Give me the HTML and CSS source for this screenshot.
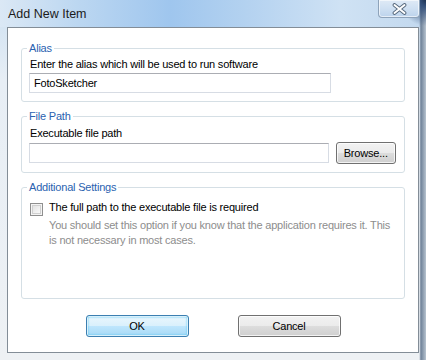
FILE: index.html
```html
<!DOCTYPE html>
<html lang="en">
<head>
  <meta charset="UTF-8">
  <title>Add New Item</title>
  <link rel="stylesheet" href="styles.css">
</head>
<body>
  <div class="window">
    <div class="titlebar">
      <span class="title">Add New Item</span>
      <button class="close" title="Close">
        <svg width="15" height="12" viewBox="0 0 15 12">
          <path d="M2.5 2 L12.5 10 M12.5 2 L2.5 10" stroke="#56687c" stroke-width="3.8" stroke-linecap="round"/>
          <path d="M2.5 2 L12.5 10 M12.5 2 L2.5 10" stroke="#ffffff" stroke-width="2" stroke-linecap="round"/>
        </svg>
      </button>
    </div>

    <div class="client">
      <fieldset class="group">
        <legend>Alias</legend>
        <div class="label">Enter the alias which will be used to run software</div>
        <input class="textbox" type="text" value="FotoSketcher">
      </fieldset>

      <fieldset class="group path">
        <legend>File Path</legend>
        <div class="label">Executable file path</div>
        <div class="row">
          <input class="textbox" type="text" value="">
          <button class="btn browse">Browse...</button>
        </div>
      </fieldset>

      <fieldset class="group settings">
        <legend>Additional Settings</legend>
        <label class="check">
          <span class="checkbox"></span>
          <span>The full path to the executable file is required</span>
        </label>
        <p class="hint">You should set this option if you know that the application requires it. This is not necessary in most cases.</p>
      </fieldset>

      <div class="actions">
        <button class="btn default">OK</button>
        <button class="btn">Cancel</button>
      </div>
    </div>
  </div>
</body>
</html>
```

FILE: styles.css
```css
html, body {
  margin: 0;
  padding: 0;
}

body {
  width: 426px;
  height: 360px;
  overflow: hidden;
  font-family: 'Liberation Sans', Arial, sans-serif;
  font-size: 11px;
  letter-spacing: -0.2px;
  color: #000;
}

.window {
  width: 426px;
  height: 360px;
  box-sizing: border-box;
  padding: 0 7px;
  background:
    radial-gradient(circle at 100% 0, #1d3150 0, #34507a 6px, rgba(80, 110, 150, 0) 26px),
    linear-gradient(90deg, rgba(0,0,0,0) 98.4%, #6f8299 98.8%, #b7c3cf 100%),
    linear-gradient(90deg, #dbe8f5 0%, #bcd7f1 18%, #9fc6ee 40%, #b4d2f0 58%, #cfe2f4 80%, #c2d8ee 100%) top / 100% 27px no-repeat,
    linear-gradient(to bottom, #d6e5f3 27px, #e7eef5 80px, #eef1f4 100%);
}

.titlebar {
  height: 27px;
  display: flex;
  justify-content: space-between;
  align-items: flex-start;
}

.title {
  font-size: 12.5px;
  letter-spacing: 0;
  line-height: 15px;
  margin-top: 7px;
  margin-left: 1px;
  color: #1b1b1b;
}

.close {
  width: 42px;
  height: 18px;
  margin-right: -1px;
  padding: 0;
  border: 1px solid #8ea3ba;
  border-top: none;
  border-radius: 0 0 4px 4px;
  background: linear-gradient(to bottom, #dfeaf6 0%, #cfe0f2 50%, #bcd3ec 100%);
  box-shadow: inset 0 0 0 1px rgba(255, 255, 255, 0.6);
  display: flex;
  align-items: center;
  justify-content: center;
}

.client {
  height: 326px;
  box-sizing: border-box;
  border: 1px solid #838d97;
  background: #fff;
  padding: 0 13px;
  display: flex;
  flex-direction: column;
}

.group {
  margin: 7px 0 0;
  padding: 1px 8px 8px 7px;
  border: 1px solid #d5dfe5;
  border-radius: 3px;
  min-width: 0;
}

.group:first-child {
  margin-top: 13px;
}

.group legend {
  padding: 0 2px;
  margin-left: -2px;
  line-height: 15px;
  color: #2a62b0;
}

.label {
  line-height: 15px;
  padding-left: 1px;
  margin-bottom: 1px;
}

.textbox {
  display: block;
  width: 302px;
  height: 20px;
  box-sizing: border-box;
  margin: 0;
  padding: 0 4px;
  border: 1px solid #d7dce4;
  border-top-color: #abadb3;
  font-family: inherit;
  font-size: 11px;
  letter-spacing: inherit;
  color: #000;
  outline: none;
}

.path {
  padding-top: 2px;
}

.row {
  display: flex;
  align-items: center;
  gap: 7px;
}

.btn {
  height: 22px;
  box-sizing: border-box;
  padding: 0;
  border: 1px solid #707070;
  border-radius: 3px;
  background: linear-gradient(to bottom, #f2f2f2 0%, #ebebeb 50%, #dddddd 51%, #cfcfcf 100%);
  box-shadow: inset 0 0 0 1px rgba(255, 255, 255, 0.75);
  font-family: inherit;
  font-size: 11px;
  letter-spacing: inherit;
  color: #000;
}

.browse {
  width: 61px;
}

.settings {
  height: 119px;
  box-sizing: border-box;
  padding-top: 5px;
}

.check {
  display: flex;
  align-items: flex-start;
  gap: 6px;
  line-height: 15px;
  margin-left: 1px;
}

.checkbox {
  width: 13px;
  height: 13px;
  box-sizing: border-box;
  margin-top: 3px;
  border: 1px solid #8f8f8f;
  background: linear-gradient(135deg, #dcdcdc 0%, #f2f2f2 60%, #ffffff 100%);
  box-shadow: inset 0 0 0 1px #f4f4f4, inset 0 0 0 2px #d0d0d0;
  flex-shrink: 0;
}

.hint {
  margin: 2px 0 0 20px;
  line-height: 15px;
  color: #8d8d8d;
}

.actions {
  display: flex;
  justify-content: center;
  gap: 49px;
  margin-top: 16px;
}

.actions .btn {
  width: 103px;
}

.default {
  border-color: #3c7fb1;
  background: linear-gradient(to bottom, #eaf6fd 0%, #d9f0fc 50%, #bee6fd 51%, #a7d9f5 100%);
  box-shadow: inset 0 0 0 1px #d8f0fb, inset 0 0 2px 1px #48c6f4;
}
```
